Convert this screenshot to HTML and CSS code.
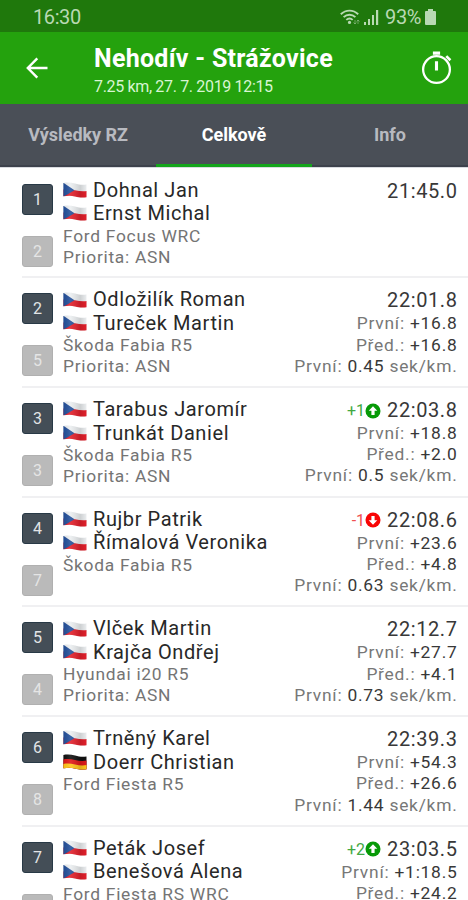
FILE: index.html
```html
<!DOCTYPE html>
<html lang="cs">
<head>
<meta charset="utf-8">
<title>Nehodív - Strážovice</title>
<link rel="stylesheet" href="styles.css">
</head>
<body>
<svg class="defs" aria-hidden="true">
  <defs>
    <clipPath id="wave"><path d="M.4 1C4 .2 8 .4 12 1.600s7 1.500 11.500 1V15.200c-4.500.6-7.500.2-11.500-.8S4 13.600 .4 14.300Z"/></clipPath>
    <linearGradient id="shade"><stop offset="0" stop-color="#000" stop-opacity=".05"/><stop offset=".3" stop-color="#fff" stop-opacity=".1"/><stop offset=".72" stop-color="#000" stop-opacity=".13"/><stop offset="1" stop-color="#000" stop-opacity="0"/></linearGradient>
    <symbol id="cz" viewBox="0 0 24 16"><g clip-path="url(#wave)"><path fill="#eceff1" d="M0 0h24v16H0z"/><path fill="#e3202b" d="M0 7.500C6 6.800 8 7.300 12 8.300s8 1.300 12 .8V16H0z"/><path fill="#24509a" d="M0 .5 11.500 8.200 0 15z"/><path fill="url(#shade)" d="M0 0h24v16H0z"/></g></symbol>
    <symbol id="de" viewBox="0 0 24 16"><g clip-path="url(#wave)"><path fill="#111" d="M0 0h24v16H0z"/><path fill="#e01818" d="M0 5.500c5-.8 8-.4 12 .6s8 1.200 12 .5V16H0z"/><path fill="#ffc61a" d="M0 10c5-.8 8-.4 12 .6s8 1.200 12 .5V16H0z"/><path fill="url(#shade)" d="M0 0h24v16H0z"/></g></symbol>
    <symbol id="up" viewBox="0 0 16 16"><circle cx="8" cy="8" r="7.500" fill="#079a07"/><path fill="#fff" d="m8 3.300 4.300 4.500H9.600v4.100H6.400V7.800H3.700z"/></symbol>
    <symbol id="down" viewBox="0 0 16 16"><circle cx="8" cy="8" r="7.500" fill="#f80505"/><path fill="#fff" d="m8 12.700 4.300-4.500H9.600V4.100H6.400v4.100H3.700z"/></symbol>
  </defs>
</svg>
<div class="screen">
  <div class="status">
    <span class="clock">16:30</span>
    <svg class="wifi" viewBox="0 0 20 16"><g fill="none" stroke="currentColor" stroke-width="1.900"><path d="M.8 5.200c5-4.800 12.400-4.800 17.400 0"/><path d="M3.600 8.100c3.400-3.200 8.400-3.200 11.800 0"/><path d="M6.300 10.900c2-1.700 4.400-1.700 6.400 0"/></g><circle cx="9.500" cy="13.400" r="1.600" fill="currentColor"/><path d="M15 11v4m-1.500-1.500L15 15l1.300-1.500M18 15v-4m-1.300 1.500L18 11l1.500 1.500" fill="none" stroke="currentColor" stroke-width=".8" opacity=".6"/></svg>
    <svg class="signal" viewBox="0 0 15 15"><path fill="currentColor" d="M0 12h2v3H0zM4 9h2v6H4zM8 5h2v10H8zM12 0h2.200v15H12z"/></svg>
    <span class="charge">93%</span>
    <svg class="battery" viewBox="0 0 11 16"><path fill="currentColor" d="M3 0h5v2h2q1 0 1 1v12q0 1-1 1H1q-1 0-1-1V3q0-1 1-1h2z"/></svg>
  </div>
  <header class="bar">
    <svg class="back" viewBox="0 0 22 22"><path d="M21.500 11H2M11.300 1.300 1.800 11l9.500 9.700" fill="none" stroke="#fff" stroke-width="2.400"/></svg>
    <div class="heading">
      <h1>Nehodív - Strážovice</h1>
      <p>7.25 km, 27. 7. 2019 12:15</p>
    </div>
    <svg class="timer" viewBox="0 0 30 34"><circle cx="15" cy="19" r="13" fill="none" stroke="#fff" stroke-width="2.200"/><path d="M15 11v9M11.500 3h7" fill="none" stroke="#fff" stroke-width="3"/><path d="m24.500 6 4 4" stroke="#fff" stroke-width="2.600"/></svg>
  </header>
  <nav class="tabs">
    <a class="tab">Výsledky RZ</a>
    <a class="tab active">Celkově</a>
    <a class="tab">Info</a>
  </nav>
  <main class="list">
    <article class="row">
      <div class="badges"><b>1</b><i>2</i></div>
      <div class="crew"><h2><svg><use href="#cz"/></svg>Dohnal Jan</h2><h2><svg><use href="#cz"/></svg>Ernst Michal</h2><p>Ford Focus WRC</p><p>Priorita: ASN</p></div>
      <div class="times"><h3>21:45.0</h3></div>
    </article>
    <article class="row">
      <div class="badges"><b>2</b><i>5</i></div>
      <div class="crew"><h2><svg><use href="#cz"/></svg>Odložilík Roman</h2><h2><svg><use href="#cz"/></svg>Tureček Martin</h2><p>Škoda Fabia R5</p><p>Priorita: ASN</p></div>
      <div class="times"><h3>22:01.8</h3><p>První: <em>+16.8</em></p><p>Před.: <em>+16.8</em></p><p>První: <em>0.45</em> sek/km.</p></div>
    </article>
    <article class="row">
      <div class="badges"><b>3</b><i>3</i></div>
      <div class="crew"><h2><svg><use href="#cz"/></svg>Tarabus Jaromír</h2><h2><svg><use href="#cz"/></svg>Trunkát Daniel</h2><p>Škoda Fabia R5</p><p>Priorita: ASN</p></div>
      <div class="times"><h3><span class="gain">+1</span><svg><use href="#up"/></svg>22:03.8</h3><p>První: <em>+18.8</em></p><p>Před.: <em>+2.0</em></p><p>První: <em>0.5</em> sek/km.</p></div>
    </article>
    <article class="row">
      <div class="badges"><b>4</b><i>7</i></div>
      <div class="crew"><h2><svg><use href="#cz"/></svg>Rujbr Patrik</h2><h2><svg><use href="#cz"/></svg>Římalová Veronika</h2><p>Škoda Fabia R5</p></div>
      <div class="times"><h3><span class="loss">-1</span><svg><use href="#down"/></svg>22:08.6</h3><p>První: <em>+23.6</em></p><p>Před.: <em>+4.8</em></p><p>První: <em>0.63</em> sek/km.</p></div>
    </article>
    <article class="row">
      <div class="badges"><b>5</b><i>4</i></div>
      <div class="crew"><h2><svg><use href="#cz"/></svg>Vlček Martin</h2><h2><svg><use href="#cz"/></svg>Krajča Ondřej</h2><p>Hyundai i20 R5</p><p>Priorita: ASN</p></div>
      <div class="times"><h3>22:12.7</h3><p>První: <em>+27.7</em></p><p>Před.: <em>+4.1</em></p><p>První: <em>0.73</em> sek/km.</p></div>
    </article>
    <article class="row">
      <div class="badges"><b>6</b><i>8</i></div>
      <div class="crew"><h2><svg><use href="#cz"/></svg>Trněný Karel</h2><h2><svg><use href="#de"/></svg>Doerr Christian</h2><p>Ford Fiesta R5</p></div>
      <div class="times"><h3>22:39.3</h3><p>První: <em>+54.3</em></p><p>Před.: <em>+26.6</em></p><p>První: <em>1.44</em> sek/km.</p></div>
    </article>
    <article class="row">
      <div class="badges"><b>7</b><i></i></div>
      <div class="crew"><h2><svg><use href="#cz"/></svg>Peták Josef</h2><h2><svg><use href="#cz"/></svg>Benešová Alena</h2><p>Ford Fiesta RS WRC</p></div>
      <div class="times"><h3><span class="gain">+2</span><svg><use href="#up"/></svg>23:03.5</h3><p>První: <em>+1:18.5</em></p><p>Před.: <em>+24.2</em></p></div>
    </article>
  </main>
</div>
</body>
</html>
```
FILE: styles.css
```css
* { box-sizing: border-box; margin: 0; padding: 0; }
body { background: #fff; font-family: Roboto, sans-serif; overflow: hidden; }
.defs { position: absolute; width: 0; height: 0; }
.screen { width: 468px; height: 900px; overflow: hidden; display: flex; flex-direction: column; }
.status { flex: none; height: 32px; padding: 2px 32px 0 33px; background: #1f780c; color: #b9d9b3; display: flex; align-items: center; font-size: 20px; letter-spacing: -.4px; }
.clock { margin-right: auto; }
.wifi { width: 20px; height: 16px; margin-right: 4px; }
.signal { width: 15px; height: 15px; margin-right: 6px; }
.charge { margin-right: 4px; }
.battery { width: 11px; height: 16px; }
.bar { flex: none; height: 72px; padding: 0 16px 0 26px; background: #24a20d; color: #fff; display: flex; align-items: center; }
.back { width: 22px; height: 22px; margin-right: 46px; }
.heading { flex: 1; white-space: nowrap; padding-top: 5px; }
.heading h1 { font-size: 25px; line-height: 28px; font-weight: 700; letter-spacing: .28px; }
.heading p { font-size: 16px; line-height: 20px; margin-top: 4px; letter-spacing: -.34px; color: #d8f5d2; }
.timer { width: 31px; height: 35px; margin-top: -2px; }
.tabs { flex: none; height: 64px; background: #4a4f57; border-bottom: 1px solid #d9dbe0; display: grid; grid-template-columns: repeat(3, 1fr); }
.tab { display: flex; align-items: center; justify-content: center; color: #b8bac0; font-size: 18px; font-weight: 700; letter-spacing: -.05px; border-bottom: 2px solid #3d424c; }
.tab.active { color: #fff; border-bottom: 3px solid #14a51b; padding-top: 1px; }
.list { flex: 1; overflow: hidden; margin-left: 22px; }
.row { height: 109.700px; display: flex; padding-top: 10.200px; border-bottom: 2px solid #f0f0f2; }
.row:first-child { height: 110.200px; padding-top: 10.700px; }
.badges { width: 41px; padding-top: 5px; display: flex; flex-direction: column; gap: 21px; }
.badges b, .badges i { width: 31px; height: 31px; flex: none; border-radius: 3px; font: 400 16px/29px Roboto, sans-serif; text-align: center; background: #444e57; color: #e2e4e6; border: 1px solid #283946; }
.badges i { background: #bababa; border-color: #b0b0b0; color: #e5e5e5; }
.crew { flex: 1; white-space: nowrap; }
.crew h2 { height: 23.500px; line-height: 23.500px; font-size: 20px; font-weight: 400; letter-spacing: .58px; color: #282828; display: flex; align-items: center; }
.crew svg { width: 24px; height: 16px; margin: -1px 6px 0 0; }
.crew p { font-size: 17.400px; line-height: 21px; letter-spacing: .72px; color: #747474; }
.times { text-align: right; white-space: nowrap; padding-right: 10.500px; }
.times h3 { height: 25px; line-height: 27px; font-size: 20px; font-weight: 400; letter-spacing: .58px; color: #383838; display: flex; align-items: center; justify-content: flex-end; }
.times h3 svg { width: 16px; height: 16px; margin: 0 6px 0 0; }
.times h3 span { font-size: 16px; letter-spacing: 0; }
.gain { color: #42a842; }
.loss { color: #f05050; }
.times p { font-size: 17.400px; line-height: 21.200px; letter-spacing: .75px; color: #777; }
.times em { font-style: normal; color: #383838; }
```
